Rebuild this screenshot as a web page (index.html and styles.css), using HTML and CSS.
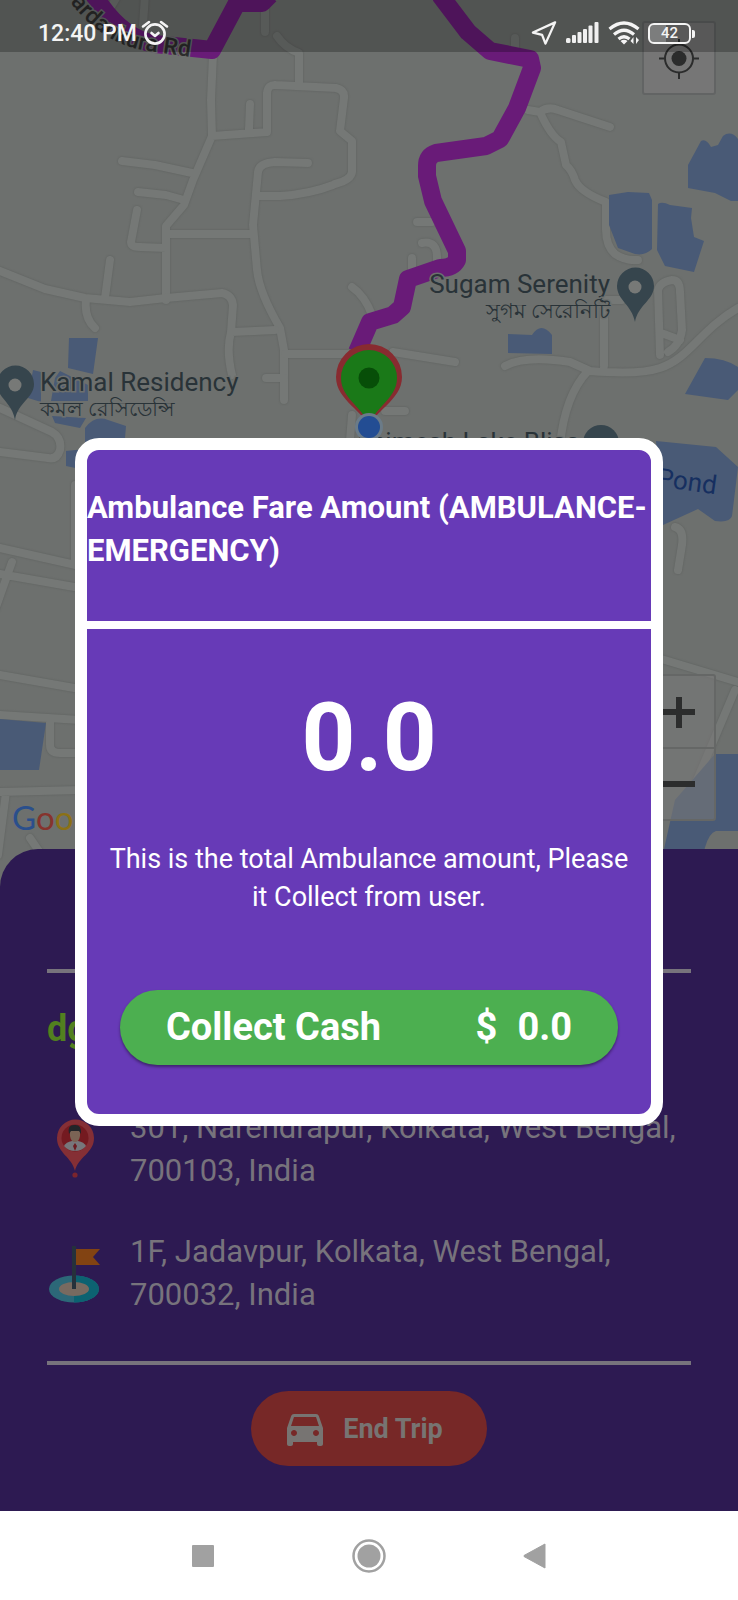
FILE: index.html
```html
<!DOCTYPE html>
<html lang="en">
<head>
<meta charset="utf-8">
<meta name="viewport" content="width=device-width, initial-scale=1">
<title>Ambulance Fare</title>
<link rel="stylesheet" href="styles.css">
</head>
<body>
<div class="screen">
  <header class="status">
    <div class="status-group">
      <span class="clock">12:40 PM</span>
      <svg class="ico-alarm" viewBox="0 0 28 26" fill="none" stroke="#f4f4f4" stroke-width="2.6" stroke-linecap="round" stroke-linejoin="round"><circle cx="14" cy="14" r="9.6"/><path d="M10.500 13l3.500 3 3.500-3M2 6.500l6-4.500M26 6.500l-6-4.500"/></svg>
    </div>
    <div class="status-group status-right">
      <svg class="ico-nav" viewBox="0 0 28 26" fill="none" stroke="#f4f4f4" stroke-width="2.4" stroke-linejoin="round"><path d="M25 2L2 12.500l9.500 2.500L15 24z"/></svg>
      <svg class="ico-signal" viewBox="0 0 34 22" fill="#f0f0f0"><rect x="0" y="16" width="4.500" height="5" rx="1.500"/><rect x="6" y="13" width="4" height="8" rx="1"/><rect x="11.500" y="10" width="4" height="11" rx="1"/><rect x="17" y="7" width="4" height="14" rx="1"/><rect x="22.500" y="3.500" width="4" height="17.500" rx="1"/><rect x="28.500" y="0" width="4" height="21" rx="1"/></svg>
      <svg class="ico-wifi" viewBox="0 0 32 24"><g fill="none" stroke="#f4f4f4" stroke-width="3.200"><path d="M1.500 8Q16-4 30.500 8"/><path d="M6 13.500Q16 5 26 13.500"/><path d="M10.500 18Q16 13.500 21.500 18"/></g><path d="M12.500 20Q16 17.500 19.500 20L16 23.500z" fill="#f4f4f4"/><path d="M25.500 16v7l-3-3zM28 23v-7l3 3z" fill="#f4f4f4"/></svg>
      <span class="battery"><span>42</span></span>
    </div>
  </header>

  <section class="map" aria-label="Map">
    <svg class="map-art" viewBox="0 0 738 889" preserveAspectRatio="xMidYMin slice">
      <rect width="738" height="889" fill="#6d706e"/>
      <g class="roads" id="road-lines">
        <path d="M145-5L143 25M118-5L108 12M265-10V32M277 36Q285 48 299 53L299 85M213 55L211 100 212 136M212 136L267 132V93Q268 84 276 85L336 88Q345 90 344 98L340 131 352 141 352 172Q351 180 335 184M249 129L250 104M212 136L193 180 184 205 166 226V300M122 161L155 165 192 173M138 192L166 195 184 200M137 210L131 242Q131 247 140 247L166 248M170 234H250M308 163L275 162Q259 163 258 172L253 225 257 270Q259 292 280 328L284 350V400M258 196L280 196Q310 194 333 185"/>
        <path d="M0 271L45 289 85 298 130 302 166 298 222 293Q232 295 233 305L231 332Q226 350 232 375M105 298L110 260M86 300Q84 318 95 328M232 332L275 330M285 354L350 354M266 378H284M352 287Q365 296 372 315M0 408L52 432Q62 438 60 450 57 460 48 458L0 452"/>
        <path d="M393 352L455 362M505 366Q525 355 570 362L590 371Q640 375 660 368C690 358 700 330 738 308M588 371Q565 395 560 445M604 300V366M604 300H622M660 355L658 290Q660 282 672 280Q680 280 680 292L682 330Q680 345 668 352M664 334L680 340M638 260Q625 261 615 254Q606 246 606 230V202Q580 192 575 180Q572 170 566 165L561 142Q550 135 540 112L528 110M540 112Q548 106 558 110L610 127M515 48V38M417 222H432M405 411H385M412 258V275M422 243Q438 240 437 260V270M350 440L352 415"/>
        <path d="M75 485V560M0 548L80 566M0 574L80 588M0 675L80 689M0 715L80 720M50 720V745Q50 753 60 753H80M12 562L-5 610M0 792L80 790M6 792L-2 855M30 838L45 860M675 527Q684 529 682 545L678 570M658 658L738 682M735 690L680 820"/>
      </g>
      <g class="water">
        <path d="M688 165L701 141Q706 138 711 147L718 145 723 136Q731 130 738 139V201H731L715 193 688 188zM609 195L628 192 649 193 652 200V249Q645 256 635 254L618 248 609 225zM658 204Q662 201 670 205L692 208 691 218 694 237 704 241 694 272 665 266 657 250zM508 334L532 335Q541 321 552 335V354L508 353zM705 358Q725 358 738 367V390L728 400 685 394zM69 338H98L93 374 68 368zM33 370L41 372V402L28 398zM55 378L60 371 88 385V401H51zM52 416L86 418 80 428 55 423zM85 428Q95 415 108 420L126 426 124 450H85zM66 451L85 449V470L66 466zM656 441L716 447 738 467 732 516Q730 523 715 521L698 509 663 525zM0 719L46 723 39 770H0zM715 754L738 754V849H664L675 800z"/>
      </g>
      <g class="zoomer"><rect x="643" y="675" width="72" height="145" rx="2"/><path d="M643 748H715"/></g>
      <path d="M716 831H738V889H700Q702 835 716 831" fill="#6d706e"/>
      <path class="route" d="M94-5Q120 38 155 44L212 50 237 3H262L270-5M440-5L468 32 490 51 530 59 532 68 517 108 500 139 486 146 436 153Q427 156 427 166V176L433 201 457 251V260Q453 268 440 268L408 279 402 307 393 315 370 322 357 352"/>
      <path id="street" d="M70 2Q101 42 142 50L190 57" fill="none"/>
      <text class="label street"><textPath href="#street">ardankura Rd</textPath></text>
      <g class="locate"><rect x="643" y="22" width="72" height="72" rx="2"/><circle cx="679" cy="58.500" r="14"/><circle cx="679" cy="58.500" r="7.500" fill="#2b2c2c" stroke="none"/><path d="M679 44V39M679 73V79M664 58.500H659M693 58.500H699"/></g>
      <g class="poi">
        <path d="M15 420C12 402-3 398-3 384A18.500 18.500 0 0 1 34 384C34 398 18 402 15 420z"/><circle cx="15" cy="385" r="6.500"/>
        <path d="M635 322C632 305 617 300 617 286A18.500 18.500 0 0 1 654 286C654 300 638 305 635 322z"/><circle cx="635" cy="287" r="6.500"/>
        <path d="M583 443A18 18 0 0 1 619 443z"/>
      </g>
      <text class="label" x="40" y="391">Kamal Residency</text>
      <text class="label bengali" x="40" y="416">কমল রেসিডেন্সি</text>
      <text class="label" x="610" y="293" text-anchor="end">Sugam Serenity</text>
      <text class="label bengali" x="610" y="318" text-anchor="end">সুগম সেরেনিটি</text>
      <text class="label" x="354" y="451">Animesh Lake Bliss</text>
      <text class="label pond" x="656" y="486" transform="rotate(8 656 486)">Pond</text>
      <path d="M369 430C366 411 336 401 336 377A33 33 0 0 1 402 377C402 401 372 411 369 430z" fill="#882b30"/>
      <path d="M369 428C366 408 341 400 341 378A28 28 0 0 1 397 378C397 400 372 408 369 428z" fill="#1a7918"/>
      <circle cx="369" cy="378" r="10.500" fill="#074e08"/>
      <circle cx="369" cy="427" r="14" fill="#6b7b88"/><circle cx="369" cy="427" r="11" fill="#234d93"/>
      <path d="M650 712H695M679 697V728M650 784H695" stroke="#2c2d2d" stroke-width="6"/>
      <text class="google" x="12" y="830"><tspan fill="#2a4f8c">G</tspan><tspan fill="#86332d">o</tspan><tspan fill="#8b7116">o</tspan></text>
    </svg>
  </section>

  <main class="trip">
    <hr class="rule">
    <h2 class="rider">dg</h2>
    <div class="stop">
      <svg class="stop-icon" viewBox="0 0 56 60"><path d="M28 52C25 38 10 34 10 19A18.500 18.500 0 0 1 47 19C47 34 31 38 28 52z" fill="#852f35"/><circle cx="28" cy="19" r="13.500" fill="#741a20"/><path d="M17 27Q19 23 25 22H31Q37 23 39 27Q35 32 28 32Q21 32 17 27z" fill="#77777b"/><path d="M28 24l2 3-2 5-2-5z" fill="#6d1b20"/><path d="M23 12H33V17Q32 23 28 23Q24 23 23 17z" fill="#7b6455"/><path d="M22 15Q20 6 27 6Q35 5 34 15L32 12H24z" fill="#222529"/><circle cx="28" cy="56" r="2.600" fill="#7a252d"/></svg>
      <p>301, Narendrapur, Kolkata, West Bengal, 700103, India</p>
    </div>
    <div class="stop">
      <svg class="stop-icon" viewBox="0 0 56 60"><ellipse cx="27" cy="46" rx="25" ry="13.500" fill="#2c6878"/><path d="M27 32.500A25 13.500 0 0 1 27 59.500z" fill="#0c6271"/><ellipse cx="27" cy="46" rx="15" ry="7" fill="#786a60"/><path d="M28 6H53L46 14 53 22H28z" fill="#824312"/><path d="M25 3H29V46H25z" fill="#25313b"/></svg>
      <p>1F, Jadavpur, Kolkata, West Bengal, 700032, India</p>
    </div>
    <hr class="rule rule-end">
    <button class="end" type="button">
      <svg class="car" viewBox="3 4 18 17" fill="#777472"><path d="M18.920 6.010C18.720 5.420 18.160 5 17.500 5h-11c-.660 0-1.210.420-1.420 1.010L3 12v8c0 .550.450 1 1 1h1c.550 0 1-.450 1-1v-1h12v1c0 .550.450 1 1 1h1c.550 0 1-.450 1-1v-8l-2.080-5.990zM6.500 16c-.830 0-1.500-.670-1.500-1.500S5.670 13 6.500 13s1.500.670 1.500 1.500S7.330 16 6.500 16zm11 0c-.830 0-1.500-.670-1.500-1.500s.670-1.500 1.500-1.500 1.500.670 1.500 1.500-.670 1.500-1.500 1.500zM5 11l1.500-4.500h11L19 11H5z"/></svg>
      End Trip
    </button>
  </main>

  <nav class="keys" aria-label="System">
    <button type="button" aria-label="Recents"><svg viewBox="0 0 36 36"><rect x="7" y="7" width="22" height="22" rx="1"/></svg></button>
    <button type="button" aria-label="Home"><svg viewBox="0 0 36 36"><circle cx="18" cy="18" r="11.500"/><circle cx="18" cy="18" r="15.500" fill="none" stroke="#a1a1a1" stroke-width="2.500"/></svg></button>
    <button type="button" aria-label="Back"><svg viewBox="0 0 36 36"><path d="M28 6V30L7 18.500V17.500z" stroke="#a1a1a1" stroke-linejoin="round"/></svg></button>
  </nav>

  <div class="overlay">
    <section class="dialog" role="dialog" aria-modal="true" aria-labelledby="fare-title">
      <h1 id="fare-title">Ambulance Fare Amount (AMBULANCE-EMERGENCY)</h1>
      <div class="fare">
        <strong>0.0</strong>
        <p>This is the total Ambulance amount, Please it Collect from user.</p>
        <button class="collect" type="button"><span>Collect Cash</span><span class="sum"><span>$</span><span>0.0</span></span></button>
      </div>
    </section>
  </div>
</div>
</body>
</html>
```
FILE: styles.css
```css
* { box-sizing: border-box; }

body {
  margin: 0;
  font-family: Roboto, "Noto Sans", sans-serif;
  background: #2d1a52;
}

h1, h2, p { margin: 0; }

button {
  border: 0;
  font-family: inherit;
  cursor: pointer;
}

.screen {
  position: relative;
  display: flex;
  flex-direction: column;
  min-height: 100vh;
}

/* Status bar */
.status {
  position: absolute;
  top: 0;
  left: 0;
  right: 0;
  z-index: 2;
  display: flex;
  justify-content: space-between;
  height: 52px;
  padding: 13px 44px 0 38px;
  background: rgba(0, 0, 0, 0.25);
  color: #f4f4f4;
}

.status-group {
  display: flex;
  align-items: center;
  height: 40px;
  gap: 4px;
}

.status-right { gap: 8px; }
.clock { font-size: 23px; font-weight: 500; }
.status-group svg { flex: none; }
.ico-alarm { width: 28px; height: 26px; }
.ico-nav { width: 27px; height: 26px; }
.ico-signal { width: 34px; height: 22px; }
.ico-wifi { width: 32px; height: 24px; }

.battery {
  position: relative;
  display: grid;
  place-items: center;
  width: 43px;
  height: 21px;
  margin-right: 3px;
  border: 2px solid #f4f4f4;
  border-radius: 6px;
  background: linear-gradient(90deg, #7c7d7d 42%, transparent 42%);
  background-clip: padding-box;
  font-size: 15px;
  font-weight: 500;
  line-height: 17px;
}

.battery::after {
  content: "";
  position: absolute;
  right: -6px;
  top: 5px;
  width: 3px;
  height: 8px;
  border-radius: 0 2px 2px 0;
  background: #f4f4f4;
}

/* Map */
.map {
  flex: 1 0 840px;
  position: relative;
  margin-bottom: -40px;
  background: #6d706e;
}

.map-art {
  position: absolute;
  inset: 0;
  width: 100%;
  height: 100%;
}

.roads {
  fill: none;
  stroke: #757876;
  stroke-width: 8;
  stroke-linecap: round;
  stroke-linejoin: round;
  filter: drop-shadow(0 0 1px #5c5f5d);
}

.water { fill: #495a76; }

.route {
  fill: none;
  stroke: #691b78;
  stroke-width: 18;
  stroke-linejoin: round;
}

.zoomer {
  fill: rgba(120, 120, 120, 0.6);
  stroke: #656766;
  stroke-width: 2;
}

.locate { fill: none; stroke: #2b2c2c; stroke-width: 2; }
.locate rect { fill: rgba(120, 120, 120, 0.8); stroke: #626464; }

.poi path { fill: #36454d; }
.poi circle { fill: #777977; }

.label {
  font-size: 26px;
  fill: #293338;
  stroke: #6d706e;
  stroke-width: 3;
  paint-order: stroke;
}

.bengali { font-size: 21px; }
.street { font-size: 23px; font-weight: 500; fill: #2c2d2d; }
.pond { fill: #162f60; stroke: none; }
.google { font: 33px Lato, sans-serif; }

/* Trip sheet */
.trip {
  position: relative;
  display: flex;
  flex-direction: column;
  padding: 120px 47px 45px;
  border-radius: 38px 0 0 0;
  background: #2d1a52;
  color: #77737c;
}

.rule {
  width: 100%;
  height: 4px;
  margin: 0;
  border: 0;
  background: #77737c;
}

.rule-end { margin-top: 8px; }

.rider {
  margin: 34px 0 54px;
  color: #52801f;
  font-size: 36px;
  line-height: 44px;
}

.stop {
  display: flex;
  align-items: center;
  gap: 27px;
  height: 88px;
  margin-bottom: 36px;
  font-size: 31px;
  line-height: 43px;
}

.stop-icon { flex: none; width: 56px; height: 60px; }

.end {
  display: flex;
  align-items: center;
  justify-content: center;
  gap: 20px;
  align-self: center;
  width: 236px;
  height: 75px;
  margin-top: 26px;
  padding: 0 14px 0 6px;
  border-radius: 38px;
  background: #772827;
  color: #777472;
  font-size: 27px;
  font-weight: 700;
}

.car { width: 36px; height: 34px; }

/* System keys */
.keys {
  display: flex;
  justify-content: center;
  gap: 130px;
  align-items: center;
  height: 89px;
  background: #fff;
}

.keys button { padding: 0; background: none; }
.keys svg { display: block; width: 36px; height: 36px; fill: #a1a1a1; }

/* Fare dialog */
.overlay {
  position: absolute;
  inset: 52px 75px 89px;
  z-index: 3;
  display: grid;
  align-items: center;
}

.dialog {
  border: 12px solid #fff;
  border-radius: 24px;
  background: #673ab7;
  color: #fff;
}

.dialog h1 {
  padding: 36px 0 49px;
  border-bottom: 8px solid #fff;
  font-size: 31px;
  line-height: 43px;
}

.fare {
  display: flex;
  flex-direction: column;
  align-items: center;
  padding: 61px 16px 49px;
}

.fare strong { font-size: 94px; line-height: 96px; }

.fare p {
  margin-top: 54px;
  font-size: 27px;
  line-height: 38px;
  text-align: center;
}

.collect {
  display: flex;
  align-items: center;
  justify-content: space-between;
  align-self: stretch;
  height: 75px;
  margin: 74px 17px 0;
  padding: 0 46px;
  border-radius: 38px;
  background: #4caf50;
  box-shadow: 0 2px 3px rgba(0, 0, 0, 0.4);
  color: #fff;
  font-size: 38px;
  font-weight: 700;
}

.sum { display: flex; gap: 20px; }
```
